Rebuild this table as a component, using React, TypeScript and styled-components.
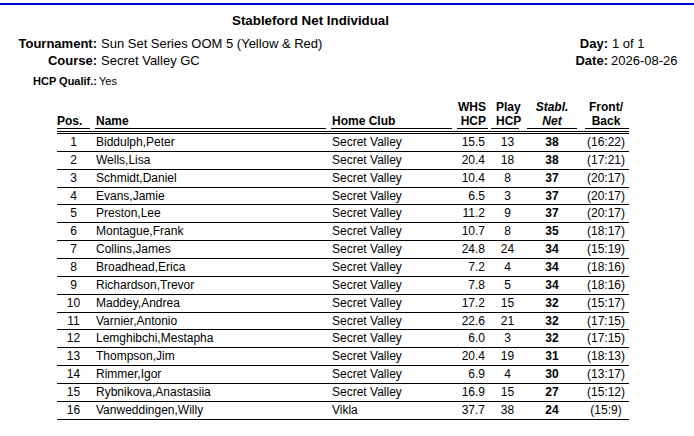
import React from "react";
import styled, { createGlobalStyle } from "styled-components";

const Global = createGlobalStyle`
  html, body { margin: 0; padding: 0; background: #fff; }
  body { font-family: "Liberation Sans", Arial, sans-serif; color: #000; }
`;

const Page = styled.div`
  width: 694px;
  height: 436px;
  box-sizing: border-box;
  margin-top: 3px;
  border-top: 2px solid #0000cd;
  overflow: hidden;
`;

const Title = styled.div`
  margin-top: 8px;
  padding-right: 73px;
  text-align: center;
  font-size: 13.33px;
  line-height: 16px;
  font-weight: bold;
`;

const Info = styled.div`
  margin-top: 6px;
  display: grid;
  grid-template-columns: 97px 1fr 60px 86px;
  grid-auto-rows: 17px;
  font-size: 13px;
  line-height: 17px;
`;

const Label = styled.div<{ $small?: boolean }>`
  font-weight: bold;
  text-align: right;
  white-space: nowrap;
  font-size: ${(p) => (p.$small ? "11px" : "13px")};
`;

const Value = styled.div<{ $small?: boolean; $pad?: number }>`
  padding-left: ${(p) => p.$pad ?? 4}px;
  white-space: nowrap;
  font-size: ${(p) => (p.$small ? "11px" : "13px")};
`;

const SmallRow = styled.div`
  grid-column: 1 / span 2;
  display: grid;
  grid-template-columns: 97px 1fr;
  margin-top: 4px;
`;

const Table = styled.div`
  margin: 14px 0 0 57px;
  width: 572px;
  font-size: 12px;
`;

const cols = "38px 236px 126px 34px 36px 58px 44px";

const HeadRow = styled.div`
  display: grid;
  grid-template-columns: ${cols};
  align-items: end;
`;

const HeadCell = styled.div<{ $gap: number; $align: string; $pl?: number; $pr?: number; $italic?: boolean }>`
  margin-right: ${(p) => p.$gap}px;
  border-bottom: 1px solid #000;
  font-weight: bold;
  font-style: ${(p) => (p.$italic ? "italic" : "normal")};
  line-height: 14px;
  text-align: ${(p) => p.$align};
  padding-left: ${(p) => p.$pl ?? 0}px;
  padding-right: ${(p) => p.$pr ?? 0}px;
  white-space: nowrap;
`;

const DoubleRule = styled.div`
  margin-top: 2px;
  height: 1px;
  border-top: 1px solid #000;
  border-bottom: 1px solid #000;
`;

const Row = styled.div`
  display: grid;
  grid-template-columns: ${cols};
  height: 16.87px;
  border-bottom: 1px solid #000;
  line-height: 17px;
`;

const Cell = styled.div<{ $align: string; $pl?: number; $pr?: number; $bold?: boolean }>`
  text-align: ${(p) => p.$align};
  padding-left: ${(p) => p.$pl ?? 0}px;
  padding-right: ${(p) => p.$pr ?? 0}px;
  font-weight: ${(p) => (p.$bold ? "bold" : "normal")};
  white-space: nowrap;
`;

const rows: [string, string, string, string, string, string, string][] = [
  ["1", "Biddulph,Peter", "Secret Valley", "15.5", "13", "38", "(16:22)"],
  ["2", "Wells,Lisa", "Secret Valley", "20.4", "18", "38", "(17:21)"],
  ["3", "Schmidt,Daniel", "Secret Valley", "10.4", "8", "37", "(20:17)"],
  ["4", "Evans,Jamie", "Secret Valley", "6.5", "3", "37", "(20:17)"],
  ["5", "Preston,Lee", "Secret Valley", "11.2", "9", "37", "(20:17)"],
  ["6", "Montague,Frank", "Secret Valley", "10.7", "8", "35", "(18:17)"],
  ["7", "Collins,James", "Secret Valley", "24.8", "24", "34", "(15:19)"],
  ["8", "Broadhead,Erica", "Secret Valley", "7.2", "4", "34", "(18:16)"],
  ["9", "Richardson,Trevor", "Secret Valley", "7.8", "5", "34", "(18:16)"],
  ["10", "Maddey,Andrea", "Secret Valley", "17.2", "15", "32", "(15:17)"],
  ["11", "Varnier,Antonio", "Secret Valley", "22.6", "21", "32", "(17:15)"],
  ["12", "Lemghibchi,Mestapha", "Secret Valley", "6.0", "3", "32", "(17:15)"],
  ["13", "Thompson,Jim", "Secret Valley", "20.4", "19", "31", "(18:13)"],
  ["14", "Rimmer,Igor", "Secret Valley", "6.9", "4", "30", "(13:17)"],
  ["15", "Rybnikova,Anastasiia", "Secret Valley", "16.9", "15", "27", "(15:12)"],
  ["16", "Vanweddingen,Willy", "Vikla", "37.7", "38", "24", "(15:9)"],
];

export default function App() {
  return (
    <>
      <Global />
      <Page>
        <Title>Stableford Net Individual</Title>
        <Info>
          <Label>Tournament:</Label>
          <Value>Sun Set Series OOM 5 (Yellow &amp; Red)</Value>
          <Label>Day:</Label>
          <Value $pad={4}>1 of 1</Value>
          <Label>Course:</Label>
          <Value>Secret Valley GC</Value>
          <Label>Date:</Label>
          <Value $pad={3}>2026-08-26</Value>
          <SmallRow>
            <Label $small>HCP Qualif.:</Label>
            <Value $small $pad={2}>Yes</Value>
          </SmallRow>
        </Info>
        <Table>
          <HeadRow>
            <HeadCell $gap={5} $align="left">Pos.</HeadCell>
            <HeadCell $gap={5} $align="left" $pl={1}>Name</HeadCell>
            <HeadCell $gap={5} $align="left" $pl={1}>Home Club</HeadCell>
            <HeadCell $gap={3} $align="right" $pr={2}>WHS<br />HCP</HeadCell>
            <HeadCell $gap={8} $align="center" $pl={5}>Play<br />HCP</HeadCell>
            <HeadCell $gap={8} $align="center" $italic>Stabl.<br />Net</HeadCell>
            <HeadCell $gap={0} $align="center" $pr={2}>Front/<br />Back</HeadCell>
          </HeadRow>
          <DoubleRule />
          {rows.map((r) => (
            <Row key={r[0]}>
              <Cell $align="center" $pr={5}>{r[0]}</Cell>
              <Cell $align="left" $pl={1}>{r[1]}</Cell>
              <Cell $align="left" $pl={1}>{r[2]}</Cell>
              <Cell $align="right" $pr={6}>{r[3]}</Cell>
              <Cell $align="center" $pl={5} $pr={8}>{r[4]}</Cell>
              <Cell $align="center" $pr={8} $bold>{r[5]}</Cell>
              <Cell $align="center" $pr={2}>{r[6]}</Cell>
            </Row>
          ))}
        </Table>
      </Page>
    </>
  );
}
